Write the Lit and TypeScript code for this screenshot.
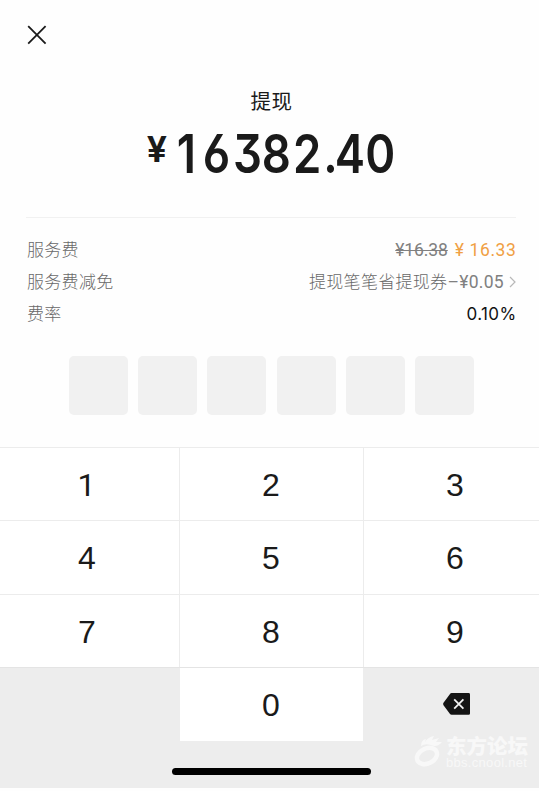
import { LitElement, html, css } from 'lit';
import { customElement, property } from 'lit/decorators.js';
import { classMap } from 'lit/directives/class-map.js';

@customElement('pin-boxes')
export class PinBoxes extends LitElement {

  static styles = css`
    :host {
      display: flex;
      justify-content: center;
      gap: 10.4px;
    }

    .box {
      width: 59px;
      height: 59px;
      border-radius: 5px;
      background: #f1f1f1;
    }
  `;

  @property({ type: Number })
  length = 6;

  render() {
    return html`${Array.from({ length: this.length }, () => html`<div class="box"></div>`)}`;
  }
}

@customElement('num-pad')
export class NumPad extends LitElement {

  static styles = css`
    :host {
      display: block;
      overflow: hidden;
      background: #ededed;
    }

    .grid {
      display: grid;
      grid-template-columns: repeat(3, 184px);
      grid-template-rows: 73px 74px 73px 74px;
      margin-left: -4px;
      width: 552px;
    }

    .key {
      display: flex;
      align-items: center;
      justify-content: center;
      box-sizing: border-box;
      padding: 1px 1px 0 0;
      border: 0 solid #ececec;
      border-top-width: 1px;
      border-right-width: 1px;
      background: #ffffff;
      color: #1a1a1a;
      font-family: "Liberation Sans", Arial, sans-serif;
      font-size: 32px;
      line-height: 1;
    }

    .one {
      padding: 1px 2px 0 0;
      font-family: Roboto, sans-serif;
    }

    .blank {
      border-color: #e4e4e4;
      border-right-width: 0;
      background: #ededed;
    }

    .zero {
      margin-right: 1px;
      padding: 0 1px 0 0;
      border-color: #e4e4e4;
      border-right-width: 0;
    }

    .delete {
      margin-left: -1px;
      padding: 0 0 2px 3px;
    }
  `;

  private press(key: string) {
    this.dispatchEvent(new CustomEvent('key-press', {
      detail: { key },
      bubbles: true,
      composed: true
    }));
  }

  render() {
    return html`
      <div class="grid">
        ${['1', '2', '3', '4', '5', '6', '7', '8', '9'].map(key => html`
          <div class=${classMap({ key: true, one: key === '1' })} @click=${() => this.press(key)}>${key}</div>
        `)}
        <div class="key blank"></div>
        <div class="key zero" @click=${() => this.press('0')}>0</div>
        <div class="key blank delete" @click=${() => this.press('delete')}>
          <svg width="28" height="22" viewBox="0 0 28 22">
            <path d="M8.6 0H25.6Q27 0 27 1.4V20.4Q27 21.8 25.6 21.8H8.6Q7.6 21.8 7 21L.5 12.2Q-.2 11 .5 9.8L7 .9Q7.6 0 8.6 0Z" fill="#141414" />
            <path d="M11.2 6.4L20.4 15.6M20.4 6.4L11.2 15.6" stroke="#f2f2f2" stroke-width="1.8" />
          </svg>
        </div>
      </div>
    `;
  }
}

@customElement('app-root')
export class AppRoot extends LitElement {

  static styles = css`
    :host {
      display: block;
      position: relative;
      width: 539px;
      height: 791px;
      overflow: hidden;
      background: #fefefe;
      font-family: "Noto Sans CJK SC", sans-serif;
    }

    .page {
      display: flex;
      flex-direction: column;
      height: 788px;
      background: #fefefe;
    }

    .header {
      padding: 25px 0 0 27px;
      height: 64px;
      box-sizing: border-box;
    }

    .header svg {
      display: block;
    }

    .summary {
      display: flex;
      flex-direction: column;
      align-items: center;
      height: 153px;
      margin: 0 23px 0 26px;
      border-bottom: 1px solid #f1f1f1;
    }

    .title {
      margin-top: 21px;
      padding-left: 1px;
      color: #1a1a1a;
      font-size: 20.5px;
      line-height: 30px;
      letter-spacing: 0.4px;
    }

    .amount {
      display: block;
      margin-top: 4px;
      overflow: visible;
      fill: #1a1a1a;
      font-family: Inter, sans-serif;
      font-weight: 600;
    }

    .currency {
      font-family: Roboto, sans-serif;
      font-size: 37px;
    }

    .digits {
      font-size: 53.5px;
      font-feature-settings: "cv03", "cv09";
    }

    .fees {
      padding: 16px 23px 0 27px;
    }

    .row {
      display: flex;
      align-items: center;
      justify-content: space-between;
      height: 32px;
      color: #686868;
      font-size: 17px;
      font-weight: 300;
      line-height: 24px;
      letter-spacing: 0.3px;
    }

    .label,
    .coupon {
      padding-bottom: 2px;
    }

    .value {
      display: flex;
      align-items: center;
      white-space: pre;
    }

    .number {
      color: #808080;
      font-family: Roboto, sans-serif;
      font-size: 17.5px;
      font-weight: 400;
    }

    .old {
      letter-spacing: -0.1px;
      text-decoration: line-through;
    }

    .price {
      margin-left: 7px;
      margin-right: -0.5px;
      color: #f0a044;
      letter-spacing: 0.6px;
    }

    .coupon {
      letter-spacing: 0.3px;
    }

    .rate {
      color: #111111;
      font-family: Inter, sans-serif;
      font-weight: 400;
      letter-spacing: 0.4px;
      margin-right: -0.5px;
    }

    .chevron {
      margin-left: 5px;
    }

    pin-boxes {
      margin: 26px 0 32px 4px;
    }

    num-pad {
      flex: 1;
    }

    .home-bar {
      position: absolute;
      left: 172px;
      top: 768px;
      width: 199px;
      height: 7px;
      border-radius: 4px;
      background: #000000;
    }

    .watermark {
      position: absolute;
      left: 413px;
      top: 734px;
      display: flex;
      color: #f8f8f8;
    }

    .site {
      margin-left: 3px;
      white-space: nowrap;
    }

    .site-name {
      font-size: 20.5px;
      font-weight: 900;
      line-height: 22px;
    }

    .site-url {
      font-family: "Liberation Sans", Arial, sans-serif;
      font-size: 13px;
      line-height: 13px;
      letter-spacing: 0.3px;
    }
  `;

  render() {
    return html`
      <div class="page">
        <div class="header">
          <svg width="20" height="20" viewBox="0 0 20 20">
            <path d="M1.2 1.2L18.6 18.6M18.6 1.2L1.2 18.6" stroke="#1a1a1a" stroke-width="1.8" />
          </svg>
        </div>
        <div class="summary">
          <div class="title">提现</div>
          <svg class="amount" width="256" height="72" viewBox="0 0 256 72">
            <text class="currency" x="4" y="42.5">¥</text>
            <text class="digits" transform="scale(0.85 1)" x="39.6 70.2 105.8 139.8 176.4 212 225.6 261.6" y="54.4">16382.40</text>
          </svg>
        </div>
        <div class="fees">
          <div class="row">
            <span class="label">服务费</span>
            <span class="value">
              <span class="number old">¥16.38</span>
              <span class="number price">¥ 16.33</span>
            </span>
          </div>
          <div class="row">
            <span class="label">服务费减免</span>
            <span class="value">
              <span class="coupon">提现笔笔省提现券</span><span class="number">–¥0.05</span>
              <svg class="chevron" width="7" height="12" viewBox="0 0 7 12">
                <path d="M1 1L6 6L1 11" fill="none" stroke="#b8b8b8" stroke-width="1.2" />
              </svg>
            </span>
          </div>
          <div class="row">
            <span class="label">费率</span>
            <span class="value rate">0.10%</span>
          </div>
        </div>
        <pin-boxes length="6"></pin-boxes>
        <num-pad></num-pad>
      </div>
      <div class="home-bar"></div>
      <div class="watermark">
        <svg width="30" height="34" viewBox="0 0 30 34">
          <ellipse cx="14" cy="22" rx="10.5" ry="7.5" fill="none" stroke="#f8f8f8" stroke-width="4.5" transform="rotate(-25 14 22)" />
          <path d="M8 12Q8 6 13 5L12 8Q15 3 21 2L19 6L26 4L23 8L29 8Q24 14 18 11Q12 9 8 12Z" fill="#f8f8f8" />
        </svg>
        <div class="site">
          <div class="site-name">东方论坛</div>
          <div class="site-url">bbs.cnool.net</div>
        </div>
      </div>
    `;
  }
}
